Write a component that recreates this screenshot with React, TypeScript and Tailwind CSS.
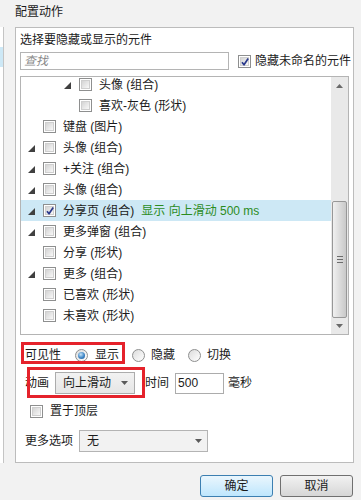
import React from "react";

type Row = {
  level: number;
  expand: boolean;
  label: string;
  checked?: boolean;
  selected?: boolean;
  note?: string;
};

const rows: Row[] = [
  { level: 2, expand: true, label: "头像 (组合)" },
  { level: 2, expand: false, label: "喜欢-灰色 (形状)" },
  { level: 0, expand: false, label: "键盘 (图片)" },
  { level: 0, expand: true, label: "头像 (组合)" },
  { level: 0, expand: true, label: "+关注 (组合)" },
  { level: 0, expand: true, label: "头像 (组合)" },
  {
    level: 0,
    expand: true,
    label: "分享页 (组合)",
    checked: true,
    selected: true,
    note: "显示 向上滑动 500 ms",
  },
  { level: 0, expand: true, label: "更多弹窗 (组合)" },
  { level: 0, expand: false, label: "分享 (形状)" },
  { level: 0, expand: true, label: "更多 (组合)" },
  { level: 0, expand: false, label: "已喜欢 (形状)" },
  { level: 0, expand: false, label: "未喜欢 (形状)" },
];

const Checkbox = ({ checked = false }: { checked?: boolean }) => (
  <span className="relative flex h-[13px] w-[13px] shrink-0 border border-[#8e8f8f] bg-white p-[1px]">
    <span className="block h-full w-full border border-[#cfcfcf] bg-gradient-to-br from-[#d4d4d4] to-[#f8f8f8]" />
    {checked && (
      <svg
        className="absolute left-[1px] top-[1px]"
        width="10"
        height="10"
        viewBox="0 0 10 10"
      >
        <path
          d="M2 5.2 L4 7.8 L8.2 1.6"
          fill="none"
          stroke="#2b3a8c"
          strokeWidth="1.7"
          strokeLinejoin="round"
        />
      </svg>
    )}
  </span>
);

const Radio = ({ on = false }: { on?: boolean }) => (
  <span className="flex h-[13px] w-[13px] shrink-0 items-center justify-center rounded-full border border-[#8e8f8f] bg-gradient-to-br from-[#dcdcdc] to-[#ffffff]">
    {on && (
      <span className="block h-[7px] w-[7px] rounded-full bg-[radial-gradient(circle_at_40%_35%,#c6e4f8,#3f86c6_55%,#1d538f)]" />
    )}
  </span>
);

const Expander = () => (
  <svg width="7" height="7" viewBox="0 0 7 7" className="mt-[2px]">
    <path d="M7 0V7H0Z" fill="#404040" />
  </svg>
);

const DownArrow = () => (
  <svg width="7" height="4" viewBox="0 0 7 4">
    <path d="M0 0H7L3.5 4Z" fill="#5a5a5a" />
  </svg>
);

export default function App() {
  return (
    <div className="flex h-[500px] w-[361px] flex-col overflow-hidden bg-[#f2f2f2] text-[12px] leading-[16px] text-[#1b1b1b] font-['Liberation_Sans','Noto_Sans_CJK_SC',sans-serif]">
      <div className="h-[27px] pl-[15px] pt-[4px]">配置动作</div>

      <div className="flex h-[436px]">
        {/* side list strip */}
        <div className="w-[4px] border-r border-[#c4c4c4] bg-white pt-[20px]">
          <div className="h-[20px] bg-[#cde8f6]" />
        </div>

        <div className="relative ml-[11px] flex w-[339px] flex-col border border-[#bcbcbc] bg-white pl-[4px] pr-[5px]">
          <div className="flex h-[24px] items-center">选择要隐藏或显示的元件</div>

          <div className="flex h-[18px] items-center whitespace-nowrap">
            <div className="flex h-[18px] w-[209px] shrink-0 items-center border border-[#b4b4b4] bg-white pl-[3px] italic text-[#8a8a8a]">
              查找
            </div>
            <div className="ml-[9px] flex shrink-0 items-center gap-[4px]">
              <Checkbox checked />
              <span>隐藏未命名的元件</span>
            </div>
          </div>

          {/* element tree */}
          <div className="mt-[6px] flex h-[259px] w-[329px] overflow-hidden border border-[#b4b4b4] bg-white">
            <div className="w-[310px] overflow-hidden">
              <div className="mt-[-3px]">
                {rows.map((r, i) => (
                  <div
                    key={i}
                    className={`flex h-[21px] items-center whitespace-nowrap ${
                      r.level === 2 ? "pl-[43px]" : "pl-[7px]"
                    } ${r.selected ? "bg-[#cde8f5]" : ""}`}
                  >
                    <span className="flex w-[15px] shrink-0 items-center">
                      {r.expand && <Expander />}
                    </span>
                    <Checkbox checked={r.checked} />
                    <span className="ml-[7px]">{r.label}</span>
                    {r.note && (
                      <span className="ml-[7px] text-[#2c8c1e]">{r.note}</span>
                    )}
                  </div>
                ))}
              </div>
            </div>

            {/* scrollbar */}
            <div className="flex w-[17px] flex-col items-center bg-[#e9e9e9]">
              <div className="flex h-[17px] items-center justify-center">
                <svg width="7" height="4" viewBox="0 0 7 4">
                  <path d="M0 4H7L3.5 0Z" fill="#6a6a6a" />
                </svg>
              </div>
              <div className="mt-[107px] flex h-[117px] w-[15px] flex-col items-center justify-center gap-[2px] rounded-[2px] border border-[#979797] bg-gradient-to-r from-[#f0f0f0] via-[#dcdcdc] to-[#c9c9c9]">
                <span className="block h-[1px] w-[6px] bg-[#6c6c6c]" />
                <span className="block h-[1px] w-[6px] bg-[#6c6c6c]" />
                <span className="block h-[1px] w-[6px] bg-[#6c6c6c]" />
              </div>
              <div className="flex h-[16px] items-center justify-center">
                <svg width="7" height="4" viewBox="0 0 7 4">
                  <path d="M0 0H7L3.5 4Z" fill="#6a6a6a" />
                </svg>
              </div>
            </div>
          </div>

          {/* visibility */}
          <div className="mt-[8px] flex h-[24px] items-center pl-[5px]">
            <span>可见性</span>
            <span className="ml-[14px]">
              <Radio on />
            </span>
            <span className="ml-[7px]">显示</span>
            <span className="ml-[13px]">
              <Radio />
            </span>
            <span className="ml-[6px]">隐藏</span>
            <span className="ml-[13px]">
              <Radio />
            </span>
            <span className="ml-[6px]">切换</span>
          </div>

          {/* animation */}
          <div className="mt-[5px] flex h-[22px] items-center pl-[5px]">
            <span>动画</span>
            <div className="ml-[6px] flex h-[22px] w-[80px] items-center justify-between border border-[#acacac] bg-gradient-to-b from-[#f2f2f2] to-[#e6e6e6] pl-[7px] pr-[6px]">
              <span>向上滑动</span>
              <DownArrow />
            </div>
            <span className="ml-[10px]">时间</span>
            <div className="ml-[6px] flex h-[21px] w-[49px] items-center border border-[#acacac] bg-white pl-[2px]">
              500
            </div>
            <span className="ml-[4px]">毫秒</span>
          </div>

          {/* bring to front */}
          <div className="mt-[7px] flex h-[20px] items-center gap-[7px] pl-[10px]">
            <Checkbox />
            <span>置于顶层</span>
          </div>

          {/* more options */}
          <div className="mt-[9px] flex h-[22px] items-center pl-[5px]">
            <span>更多选项</span>
            <div className="ml-[6px] flex h-[22px] w-[129px] items-center justify-between border border-[#b4b4b4] bg-[#f2f2f2] pl-[7px] pr-[5px]">
              <span>无</span>
              <DownArrow />
            </div>
          </div>

          {/* red annotation boxes */}
          <div className="pointer-events-none absolute left-[5px] top-[314px] h-[22px] w-[104px] border-[3px] border-[#e5222b]" />
          <div className="pointer-events-none absolute left-[11px] top-[339px] h-[31px] w-[118px] border-[3px] border-[#e5222b]" />
        </div>
      </div>

      <div className="mt-[12px] flex justify-end gap-[7px] pr-[8px]">
        <button className="flex h-[22px] w-[73px] items-center justify-center rounded-[3px] border border-[#3c7fb1] bg-gradient-to-b from-[#eaf6fd] to-[#bee6fd] text-[#1b1b1b]">
          确定
        </button>
        <button className="flex h-[22px] w-[73px] items-center justify-center rounded-[3px] border border-[#707070] bg-gradient-to-b from-[#f2f2f2] to-[#d6d6d6] text-[#1b1b1b]">
          取消
        </button>
      </div>
    </div>
  );
}
